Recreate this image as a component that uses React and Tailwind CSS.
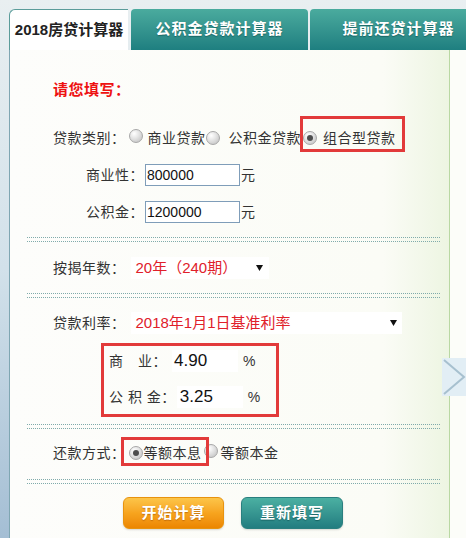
import React from "react";

const FONT = "font-['Liberation_Sans','Noto_Sans_CJK_SC',sans-serif]";

function Radio({ checked }) {
  return (
    <span className="inline-flex w-[14px] h-[14px] shrink-0 items-center justify-center rounded-full border border-[#a8a8a8] bg-[radial-gradient(circle_at_35%_30%,#ffffff_0%,#e2e2e2_45%,#bcbcbc_100%)]">
      {checked && <span className="block w-[6px] h-[6px] rounded-full bg-[#4d4d4d]" />}
    </span>
  );
}

function Divider() {
  return (
    <div className="flex flex-col gap-[3px] shrink-0">
      <div className="h-px border-t border-dotted border-[#80abab]" />
      <div className="h-px border-t border-dotted border-[#80abab]" />
    </div>
  );
}

function Caret() {
  return (
    <svg width="7" height="6" viewBox="0 0 7 6" className="shrink-0">
      <path d="M0 0 L7 0 L3.5 6 Z" fill="#111" />
    </svg>
  );
}

function Mark({ className }) {
  return <span className={`absolute border-[3px] border-[#e23a3a] pointer-events-none ${className}`} />;
}

export default function App() {
  return (
    <div
      className={`relative w-[466px] h-[538px] overflow-hidden flex bg-gradient-to-b from-[#e9eff1] via-[#d2e1ea] to-[#a4bed4] ${FONT} text-[14px] tracking-[0.5px] text-[#333]`}
    >
      <div className="w-[9px] shrink-0" />
      <div className="flex-1 min-w-0 flex flex-col pt-[9px] overflow-hidden">
        {/* tab strip */}
        <div className="flex h-[41px] shrink-0 tracking-[1px]">
          <div className="w-[119px] shrink-0 flex items-center justify-center bg-white rounded-tl-[6px] border-l border-t border-[#5b9c9a] text-[15px] font-bold tracking-[0px] text-[#222]">
            2018房贷计算器
          </div>
          <div className="ml-[3px] w-[177px] shrink-0 flex items-center justify-center rounded-t-[4px] bg-gradient-to-b from-[#4aab9e] to-[#1e7f80] text-[15px] font-bold text-white [text-shadow:0_1px_1px_rgba(0,60,60,0.5)]">
            公积金贷款计算器
          </div>
          <div className="ml-[2px] w-[177px] shrink-0 flex items-center justify-center rounded-t-[4px] bg-gradient-to-b from-[#4aab9e] to-[#1e7f80] text-[15px] font-bold text-white [text-shadow:0_1px_1px_rgba(0,60,60,0.5)]">
            提前还贷计算器
          </div>
        </div>

        {/* form panel */}
        <div className="flex-1 flex border-l border-[#7fa6b2]">
          <div className="flex-1 flex flex-col pl-[17px] pr-[9px] bg-gradient-to-r from-[#fdfdfb] via-[#fbfcf6] via-85% to-[#edf5e2]">
            <div className="mt-[28px] ml-[26px] h-[24px] flex items-center text-[15px] font-bold text-[#ee1111]">
              请您填写：
            </div>

            <div className="mt-[24px] ml-[26px] h-[24px] flex items-center">
              <span>贷款类别：</span>
              <span className="ml-[3px]"><Radio /></span>
              <span className="ml-[5px]">商业贷款</span>
              <Radio />
              <span className="ml-[9px]">公积金贷款</span>
              <span className="relative ml-[2px] h-full inline-flex items-center">
                <Radio checked />
                <span className="ml-[6px]">组合型贷款</span>
                <Mark className="-left-[3px] -right-[9px] -top-[10px] -bottom-[2px]" />
              </span>
            </div>

            <div className="mt-[13px] ml-[59px] h-[24px] flex items-center">
              <span>商业性：</span>
              <div className="ml-[1px] w-[95px] h-[22px] flex items-center border border-[#7f9db9] bg-white pl-[1px] tracking-normal text-[#111]">
                800000
              </div>
              <span className="ml-[1px]">元</span>
            </div>

            <div className="mt-[13px] ml-[59px] h-[24px] flex items-center">
              <span>公积金：</span>
              <div className="ml-[1px] w-[95px] h-[22px] flex items-center border border-[#7f9db9] bg-white pl-[1px] tracking-normal text-[#111]">
                1200000
              </div>
              <span className="ml-[1px]">元</span>
            </div>

            <div className="mt-[13px]"><Divider /></div>

            <div className="mt-[14px] ml-[26px] h-[24px] flex items-center">
              <span>按揭年数：</span>
              <div className="ml-[5px] w-[138px] h-[22px] flex items-center justify-between bg-white pl-[5px] pr-[6px] text-[15px] text-[#e0202a] tracking-normal">
                <span>20年（240期）</span>
                <Caret />
              </div>
            </div>

            <div className="mt-[13px]"><Divider /></div>

            <div className="mt-[13px] ml-[26px] h-[24px] flex items-center">
              <span>贷款利率：</span>
              <div className="ml-[5px] w-[271px] h-[22px] flex items-center justify-between bg-white pl-[5px] pr-[5px] text-[15px] text-[#e0202a] tracking-normal">
                <span>2018年1月1日基准利率</span>
                <Caret />
              </div>
            </div>

            <div className="mt-[8px] ml-[74px] w-[178px] border-[3px] border-[#e23a3a] pt-[3px] pb-[5px] pl-[5px] flex flex-col">
              <div className="h-[24px] flex items-center">
                <span>商　业：</span>
                <div className="ml-[5px] w-[66px] h-[22px] flex items-center bg-white pl-[2px] text-[17px] tracking-normal text-[#111]">
                  4.90
                </div>
                <span className="ml-[5px] tracking-normal">%</span>
              </div>
              <div className="mt-[12px] h-[24px] flex items-center">
                <span>公 积 金：</span>
                <div className="ml-[1px] w-[66px] h-[22px] flex items-center bg-white pl-[3px] text-[17px] tracking-normal text-[#111]">
                  3.25
                </div>
                <span className="ml-[5px] tracking-normal">%</span>
              </div>
            </div>

            <div className="mt-[7px]"><Divider /></div>

            <div className="mt-[12px] ml-[26px] h-[24px] flex items-center">
              <span>还款方式：</span>
              <span className="relative ml-[3px] h-full inline-flex items-center">
                <Radio checked />
                <span className="ml-[1px]">等额本息</span>
                <Mark className="-left-[8px] -right-[7px] -top-[4px] -bottom-[1px]" />
              </span>
              <span className="ml-[2px]"><Radio /></span>
              <span className="ml-[3px]">等额本金</span>
            </div>

            <div className="mt-[14px]"><Divider /></div>

            <div className="mt-[13px] ml-[96px] flex">
              <button className="w-[101px] h-[32px] rounded-[6px] border border-[#e8930f] bg-gradient-to-b from-[#fcc548] via-[#f7a41e] to-[#ec8600] text-white text-[15px] font-bold tracking-[1px] [text-shadow:0_1px_1px_rgba(150,70,0,0.5)] shadow-[0_1px_2px_rgba(0,0,0,0.15)]">
                开始计算
              </button>
              <button className="ml-[17px] w-[102px] h-[32px] rounded-[6px] border border-[#2a7f7f] bg-gradient-to-b from-[#4bb0a2] to-[#227d80] text-white text-[15px] font-bold tracking-[1px] [text-shadow:0_1px_1px_rgba(0,60,60,0.5)] shadow-[0_1px_2px_rgba(0,0,0,0.15)]">
                重新填写
              </button>
            </div>
          </div>
          <div className="w-px bg-[#b9d8a3]" />
          <div className="w-[16px] bg-[#fcfdf9]" />
        </div>
      </div>

      {/* side pager arrow */}
      <div className="absolute left-[442px] top-[358px] w-[26px] h-[38px] bg-[#e2eef5] flex items-center">
        <svg width="26" height="38" viewBox="0 0 26 38">
          <path d="M2 2 L22 19 L2 36" fill="none" stroke="#a7c0cf" strokeWidth="2" />
        </svg>
      </div>
    </div>
  );
}
